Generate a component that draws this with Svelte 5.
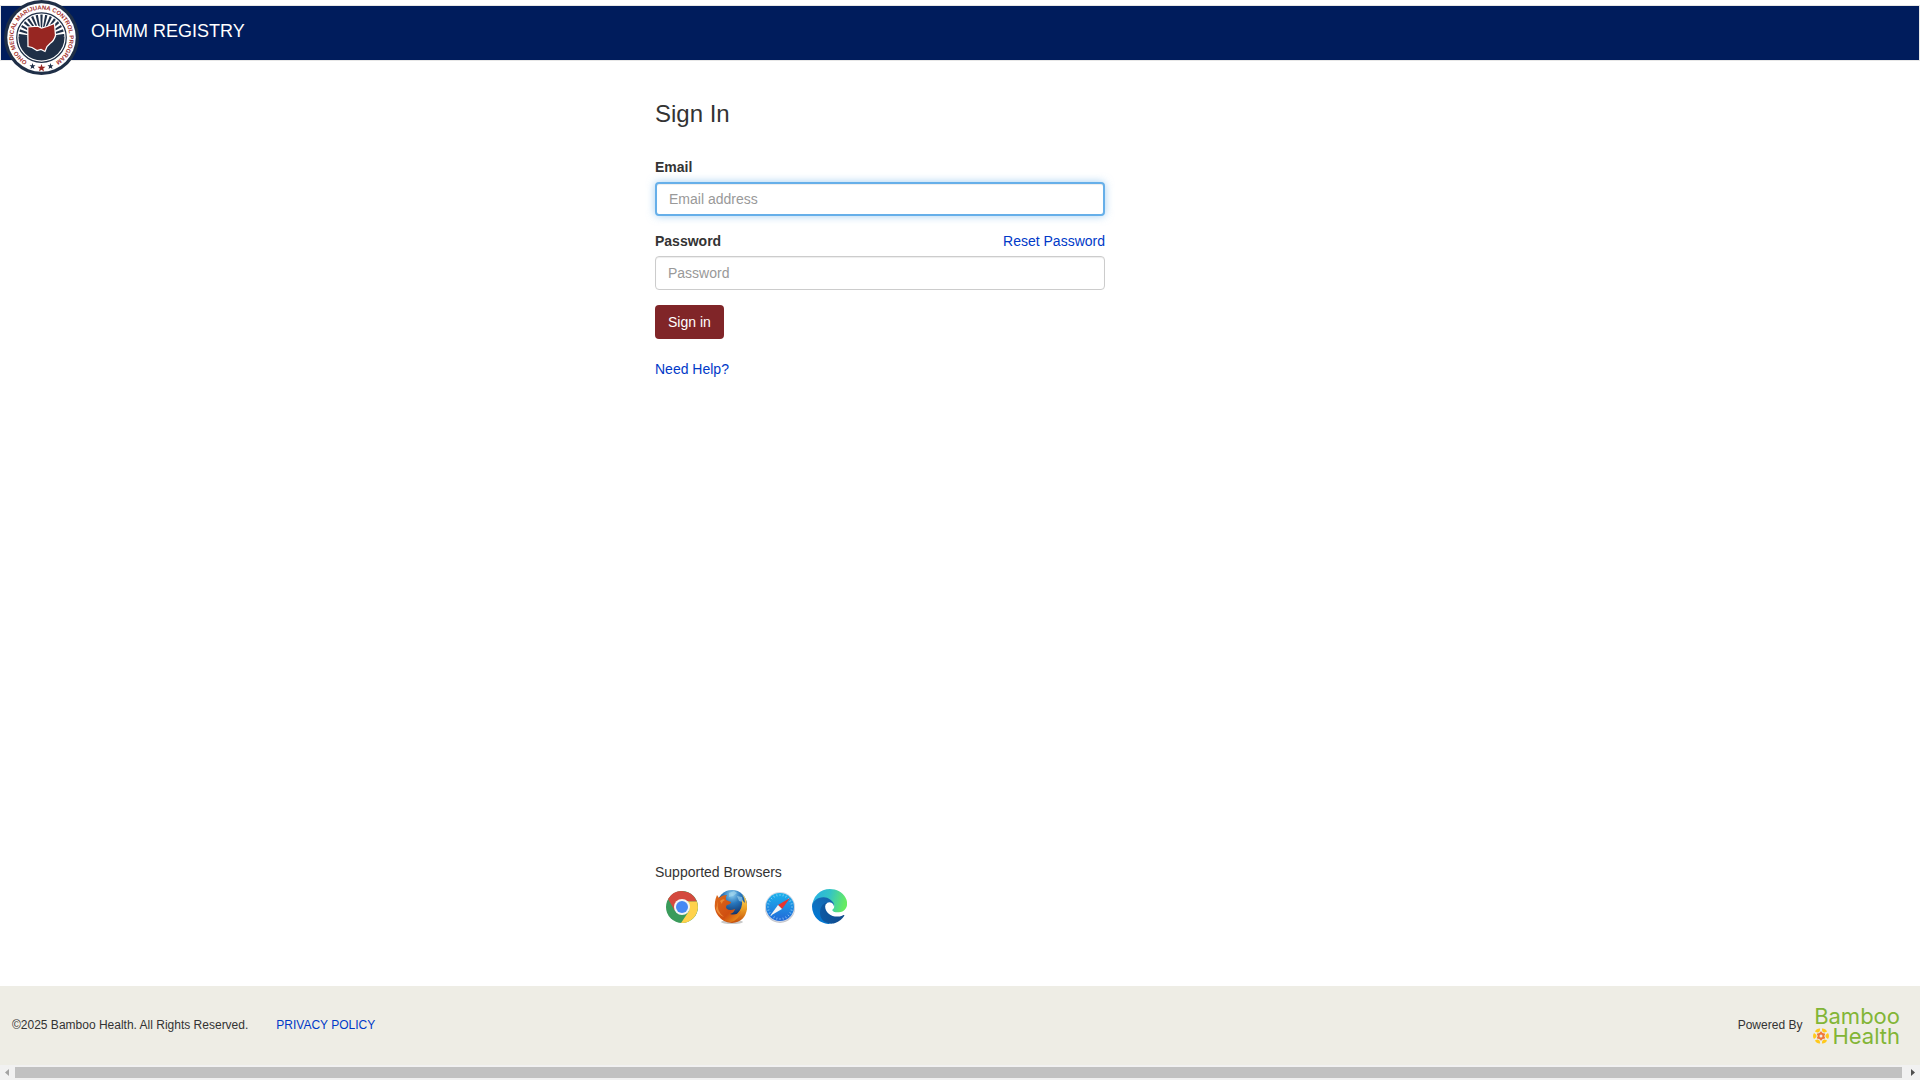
<script>
  let email = $state('');
  let password = $state('');

  const rays = Array.from({ length: 15 }, (_, i) => -84 + i * 12);
  const ticks = Array.from({ length: 24 }, (_, i) => i * 15);
  const petals = [0, 60, 120, 180, 240, 300];
</script>

<div class="page">
  <header>
    <svg class="seal" viewBox="0 0 300 300" role="img" aria-label="Ohio Medical Marijuana Control Program">
      <defs>
        <path id="seal-arc" d="M90.700 244.900A112 112 0 1 1 209.300 244.900" />
        <clipPath id="seal-disc"><circle cx="150" cy="150" r="92" /></clipPath>
      </defs>
      <circle cx="150" cy="150" r="150" fill="#1f2f47" />
      <circle cx="150" cy="150" r="137" fill="#fff" />
      <circle cx="150" cy="150" r="99" fill="#fff" stroke="#1f2f47" stroke-width="5" />
      <g clip-path="url(#seal-disc)">
        {#each rays as angle}
          <path d="M148 130L145 50H155L152 130Z" fill="#1f2f47" transform="rotate({angle} 150 150)" />
        {/each}
        <path d="M50 148Q80 138 98 150Q150 190 202 150Q220 138 250 148V250H50Z" fill="#1f2f47" />
      </g>
      <path d="M95 108L135 105L150 112L172 106L202 94L206 142Q200 164 184 174L172 186L164 206L148 198L132 202L112 190L96 186Z" fill="#972622" stroke="#fff" stroke-width="5" />
      <text class="seal-text"><textPath href="#seal-arc" startOffset="50%" text-anchor="middle">OHIO MEDICAL MARIJUANA CONTROL PROGRAM</textPath></text>
      <path d="M150 256L154 267H166L157 274L160 286L150 279L140 286L143 274L134 267H146Z" fill="#972622" />
      <path d="M114 252L117 261H126L119 267L122 276L114 271L106 276L109 267L102 261H111Z" fill="#1f2f47" />
      <path d="M186 252L189 261H198L191 267L194 276L186 271L178 276L181 267L174 261H183Z" fill="#1f2f47" />
    </svg>
    <span class="title">OHMM REGISTRY</span>
  </header>

  <main>
    <h1>Sign In</h1>
    <form onsubmit={(e) => e.preventDefault()}>
      <div class="field">
        <label for="email">Email</label>
        <input id="email" class="current" type="email" placeholder="Email address" bind:value={email} />
      </div>
      <div class="field">
        <div class="label-row">
          <label for="password">Password</label>
          <a href="#reset">Reset Password</a>
        </div>
        <input id="password" type="password" placeholder="Password" bind:value={password} />
      </div>
      <button type="submit">Sign in</button>
    </form>
    <a class="help" href="#help">Need Help?</a>

    <section class="browsers">
      <p>Supported Browsers</p>
      <div class="icons">
        <svg width="34" height="36" viewBox="0 0 34 36" role="img" aria-label="Chrome">
          <circle cx="17" cy="18" r="16" fill="#3a9b5b" />
          <path d="M3.100 10A16 16 0 0 1 31.900 12.500H17L10 22Z" fill="#d4493e" />
          <path d="M31.900 12.500A16 16 0 0 1 16 34L24 22A8 8 0 0 0 20 12.500Z" fill="#ffd24c" />
          <circle cx="17" cy="18" r="8" fill="#f4f4f4" />
          <circle cx="17" cy="18" r="6" fill="#4688f4" />
        </svg>
        <svg width="34" height="36" viewBox="0 0 34 36" role="img" aria-label="Firefox">
          <defs>
            <radialGradient id="globe" cx="50%" cy="15%" r="75%"><stop offset="0" stop-color="#8fd0f0" /><stop offset=".4" stop-color="#2877bd" /><stop offset="1" stop-color="#0b2458" /></radialGradient>
            <linearGradient id="fox" x1="0" y1="0" x2="1" y2="1"><stop offset="0" stop-color="#dd6a1c" /><stop offset=".6" stop-color="#cf4e10" /><stop offset="1" stop-color="#f2a51d" /></linearGradient>
            <linearGradient id="tail" x1="0" y1="0" x2="0" y2="1"><stop offset="0" stop-color="#ffe36a" /><stop offset=".5" stop-color="#eda225" /><stop offset="1" stop-color="#c44c0c" /></linearGradient>
          </defs>
          <ellipse cx="18" cy="33" rx="11" ry="2" fill="#777" opacity=".4" />
          <circle cx="18" cy="16" r="15" fill="url(#globe)" />
          <path d="M15 4L20 2L23 4L19 7L15 8ZM23 7L28 8L29 13L25 12Z" fill="#a8d9ed" opacity=".6" />
          <path d="M28 5Q34 10 33 20Q31 33 18 34Q8 33 5 27Q16 32 23 25Q29 19 28 11L31 14Q31 9 28 5Z" fill="url(#tail)" />
          <path d="M3 6L5 9Q8 6 13 6Q11 8 12 11L17 13Q17 15 13 16Q11 18 13 20Q16 22 21 20Q20 24 16 25Q22 27 27 22Q25 31 17 33Q4 32 1 20Q0 13 3 6Z" fill="url(#fox)" />
          <path d="M4 12Q2 22 10 28Q4 26 2 20ZM6 12Q9 9 11 11Q8 12 8 15Z" fill="#f5a044" opacity=".7" />
        </svg>
        <svg width="34" height="36" viewBox="0 0 34 36" role="img" aria-label="Safari">
          <defs><linearGradient id="sky" x1="0" y1="0" x2="0" y2="1"><stop offset="0" stop-color="#1bb2ec" /><stop offset="1" stop-color="#2268d8" /></linearGradient></defs>
          <circle cx="17" cy="19" r="15" fill="#8e8e96" opacity=".5" />
          <circle cx="17" cy="18" r="15" fill="#d0d8e6" />
          <circle cx="17" cy="18" r="14" fill="url(#sky)" />
          {#each ticks as angle}
            <path d="M17 5V7" stroke="#a9dff7" stroke-width=".6" transform="rotate({angle} 17 18)" />
          {/each}
          <path d="M27 9L19 20L15 16Z" fill="#e9342f" />
          <path d="M7 27L15 16L19 20Z" fill="#f5f5f5" />
        </svg>
        <svg width="35" height="35" viewBox="0 0 256 256" role="img" aria-label="Edge">
          <defs>
            <linearGradient id="edge-base" x1="60" y1="177" x2="241" y2="177" gradientUnits="userSpaceOnUse"><stop offset="0" stop-color="#0c59a4" /><stop offset="1" stop-color="#114a8b" /></linearGradient>
            <linearGradient id="edge-mid" x1="150" y1="110" x2="45" y2="225" gradientUnits="userSpaceOnUse"><stop offset="0" stop-color="#1565b0" /><stop offset=".5" stop-color="#1070bd" /><stop offset="1" stop-color="#0078d4" /></linearGradient>
            <linearGradient id="edge-top" x1="20" y1="50" x2="240" y2="110" gradientUnits="userSpaceOnUse"><stop offset="0" stop-color="#2ab3e1" /><stop offset=".45" stop-color="#34c4c5" /><stop offset="1" stop-color="#66eb62" /></linearGradient>
          </defs>
          <path d="M105.700 241.400a79.200 79.200 0 0 1-22.700-21.300 80.700 80.700 0 0 1 29.500-120c3.200-1.500 8.500-4.100 15.600-4a32.400 32.400 0 0 1 25.700 13 31.900 31.900 0 0 1 6.300 18.700c0-.2 24.500-79.600-80-79.600-43.900 0-80 41.700-80 78.200a130.200 130.200 0 0 0 12.100 56 128 128 0 0 0 156.400 67.100 75.500 75.500 0 0 1-62.800-8z" fill="url(#edge-mid)" />
          <path d="M231 190.500c-3.400 1.800-6.900 3.400-10.500 4.700a101.900 101.900 0 0 1-35.900 6.400c-47.300 0-88.500-32.500-88.500-74.300a31.500 31.500 0 0 1 16.400-27.300c-42.800 1.800-53.800 46.400-53.800 72.500 0 73.900 68.100 81.400 82.800 81.400 7.900 0 19.800-2.300 27-4.600l1.300-.4a128.300 128.300 0 0 0 66.600-52.800 4 4 0 0 0-5.400-5.600z" fill="url(#edge-base)" />
          <path d="M152.300 148.900c-.8 1-3.300 2.500-3.300 5.700 0 2.600 1.700 5.200 4.700 7.300 14.600 10.100 42 8.800 42.100 8.800a60 60 0 0 0 30.500-8.600 61.900 61.900 0 0 0 30.500-53.300c.3-22.400-8-37.300-11.300-43.900C224.400 24 179.200.1 130.100.1A128 128 0 0 0 2.100 126.300c.5-36.500 36.800-66 80-66 3.500 0 23.500.3 42 10.100 16.300 8.600 24.900 19 30.800 29.200 6.200 10.700 7.300 24.100 7.300 29.500s-2.700 13.300-9.900 19.800z" fill="url(#edge-top)" />
        </svg>
      </div>
    </section>
  </main>

  <footer>
    <span>©2025 Bamboo Health. All Rights Reserved.</span>
    <a href="#privacy">PRIVACY POLICY</a>
    <div class="powered">
      <span>Powered By</span>
      <div class="brand">
        <span>Bamboo</span>
        <span class="second">
          <svg width="16" height="16" viewBox="0 0 32 32" aria-hidden="true">
            {#each petals as angle}
              <path d="M10 2Q16-2 22 2L19 6Q16 8 13 6Z" fill="#ffc91c" transform="rotate({angle + 30} 16 16)" />
              <circle cx="16" cy="9" r="2" fill="#f0763b" transform="rotate({angle} 16 16)" />
            {/each}
            <circle cx="16" cy="16" r="5" fill="none" stroke="#f0763b" stroke-width="4" />
          </svg>
          Health
        </span>
      </div>
    </div>
  </footer>

  <div class="scrollbar" aria-hidden="true">
    <svg width="15" height="15" viewBox="0 0 15 15"><path d="M9 4V11L5 7.500Z" fill="#a3a3a3" /></svg>
    <div class="thumb"></div>
    <svg width="15" height="15" viewBox="0 0 15 15"><path d="M6 4V11L10 7.500Z" fill="#505050" /></svg>
  </div>
</div>

<style>
  :global(body) {
    margin: 0;
    background: #fff;
  }
  .page, .page * {
    box-sizing: border-box;
  }
  .page {
    min-height: 100vh;
    display: flex;
    flex-direction: column;
    font: 14px/20px "Liberation Sans", Arial, sans-serif;
    color: #333;
  }
  header {
    display: flex;
    height: 56px;
    margin-top: 5px;
    padding-left: 3px;
    background: #001c5c;
    border: 1px solid #e7e7e7;
  }
  .seal {
    flex: none;
    width: 75px;
    height: 75px;
    margin-top: -6px;
  }
  .seal-text {
    font: bold 24px "Liberation Sans", Arial, sans-serif;
    fill: #a3302b;
  }
  .title {
    margin: 15px 0 0 12px;
    font-size: 18px;
    line-height: 20px;
    color: #fff;
  }
  main {
    flex: 1;
    display: flex;
    flex-direction: column;
    align-items: flex-start;
    width: 610px;
    max-width: 100%;
    margin: 0 auto;
    padding: 40px 160px 60px 0;
  }
  h1 {
    margin: 0 0 30px;
    font-size: 24px;
    line-height: 26px;
    font-weight: 400;
  }
  form {
    width: 100%;
  }
  .field {
    margin-bottom: 15px;
  }
  label {
    display: block;
    margin-bottom: 5px;
    font-weight: 700;
  }
  .label-row {
    display: flex;
    justify-content: space-between;
  }
  a {
    color: #0039c8;
    text-decoration: none;
  }
  input {
    display: block;
    width: 100%;
    height: 34px;
    padding: 6px 12px;
    font: inherit;
    color: #555;
    border: 1px solid #ccc;
    border-radius: 4px;
    outline: 0;
    background: #fff;
    box-shadow: inset 0 1px 1px rgba(0, 0, 0, 0.075);
  }
  input::placeholder {
    color: #999;
    opacity: 1;
  }
  input.current, input:focus {
    border: 2px solid #66afe9;
    box-shadow: inset 0 1px 1px rgba(0, 0, 0, 0.075), 0 0 8px rgba(102, 175, 233, 0.6);
  }
  button {
    display: block;
    height: 34px;
    padding: 0 13px;
    font: inherit;
    color: #fff;
    background: #802528;
    border: 0;
    border-radius: 4px;
  }
  .help {
    margin-top: 20px;
  }
  .browsers {
    margin-top: auto;
  }
  .browsers p {
    margin: 0 0 7px;
  }
  .icons {
    display: flex;
    gap: 15px;
    padding: 0 0 1px 10px;
  }
  footer {
    display: flex;
    align-items: center;
    gap: 28px;
    height: 79px;
    padding: 0 20px 2px 12px;
    font-size: 12px;
    background: #eeede5;
  }
  .powered {
    display: flex;
    align-items: center;
    gap: 11px;
    margin-left: auto;
  }
  .brand {
    display: flex;
    flex-direction: column;
    align-items: flex-end;
    padding-top: 2px;
    font: 22px/20px Inter, "Liberation Sans", sans-serif;
    color: #82b536;
  }
  .second {
    display: flex;
    align-items: center;
    gap: 3px;
  }
  .scrollbar {
    display: flex;
    align-items: center;
    height: 15px;
    background: #f1f1f1;
  }
  .thumb {
    flex: 1;
    height: 11px;
    margin-right: 3px;
    background: #c1c1c1;
  }
</style>
